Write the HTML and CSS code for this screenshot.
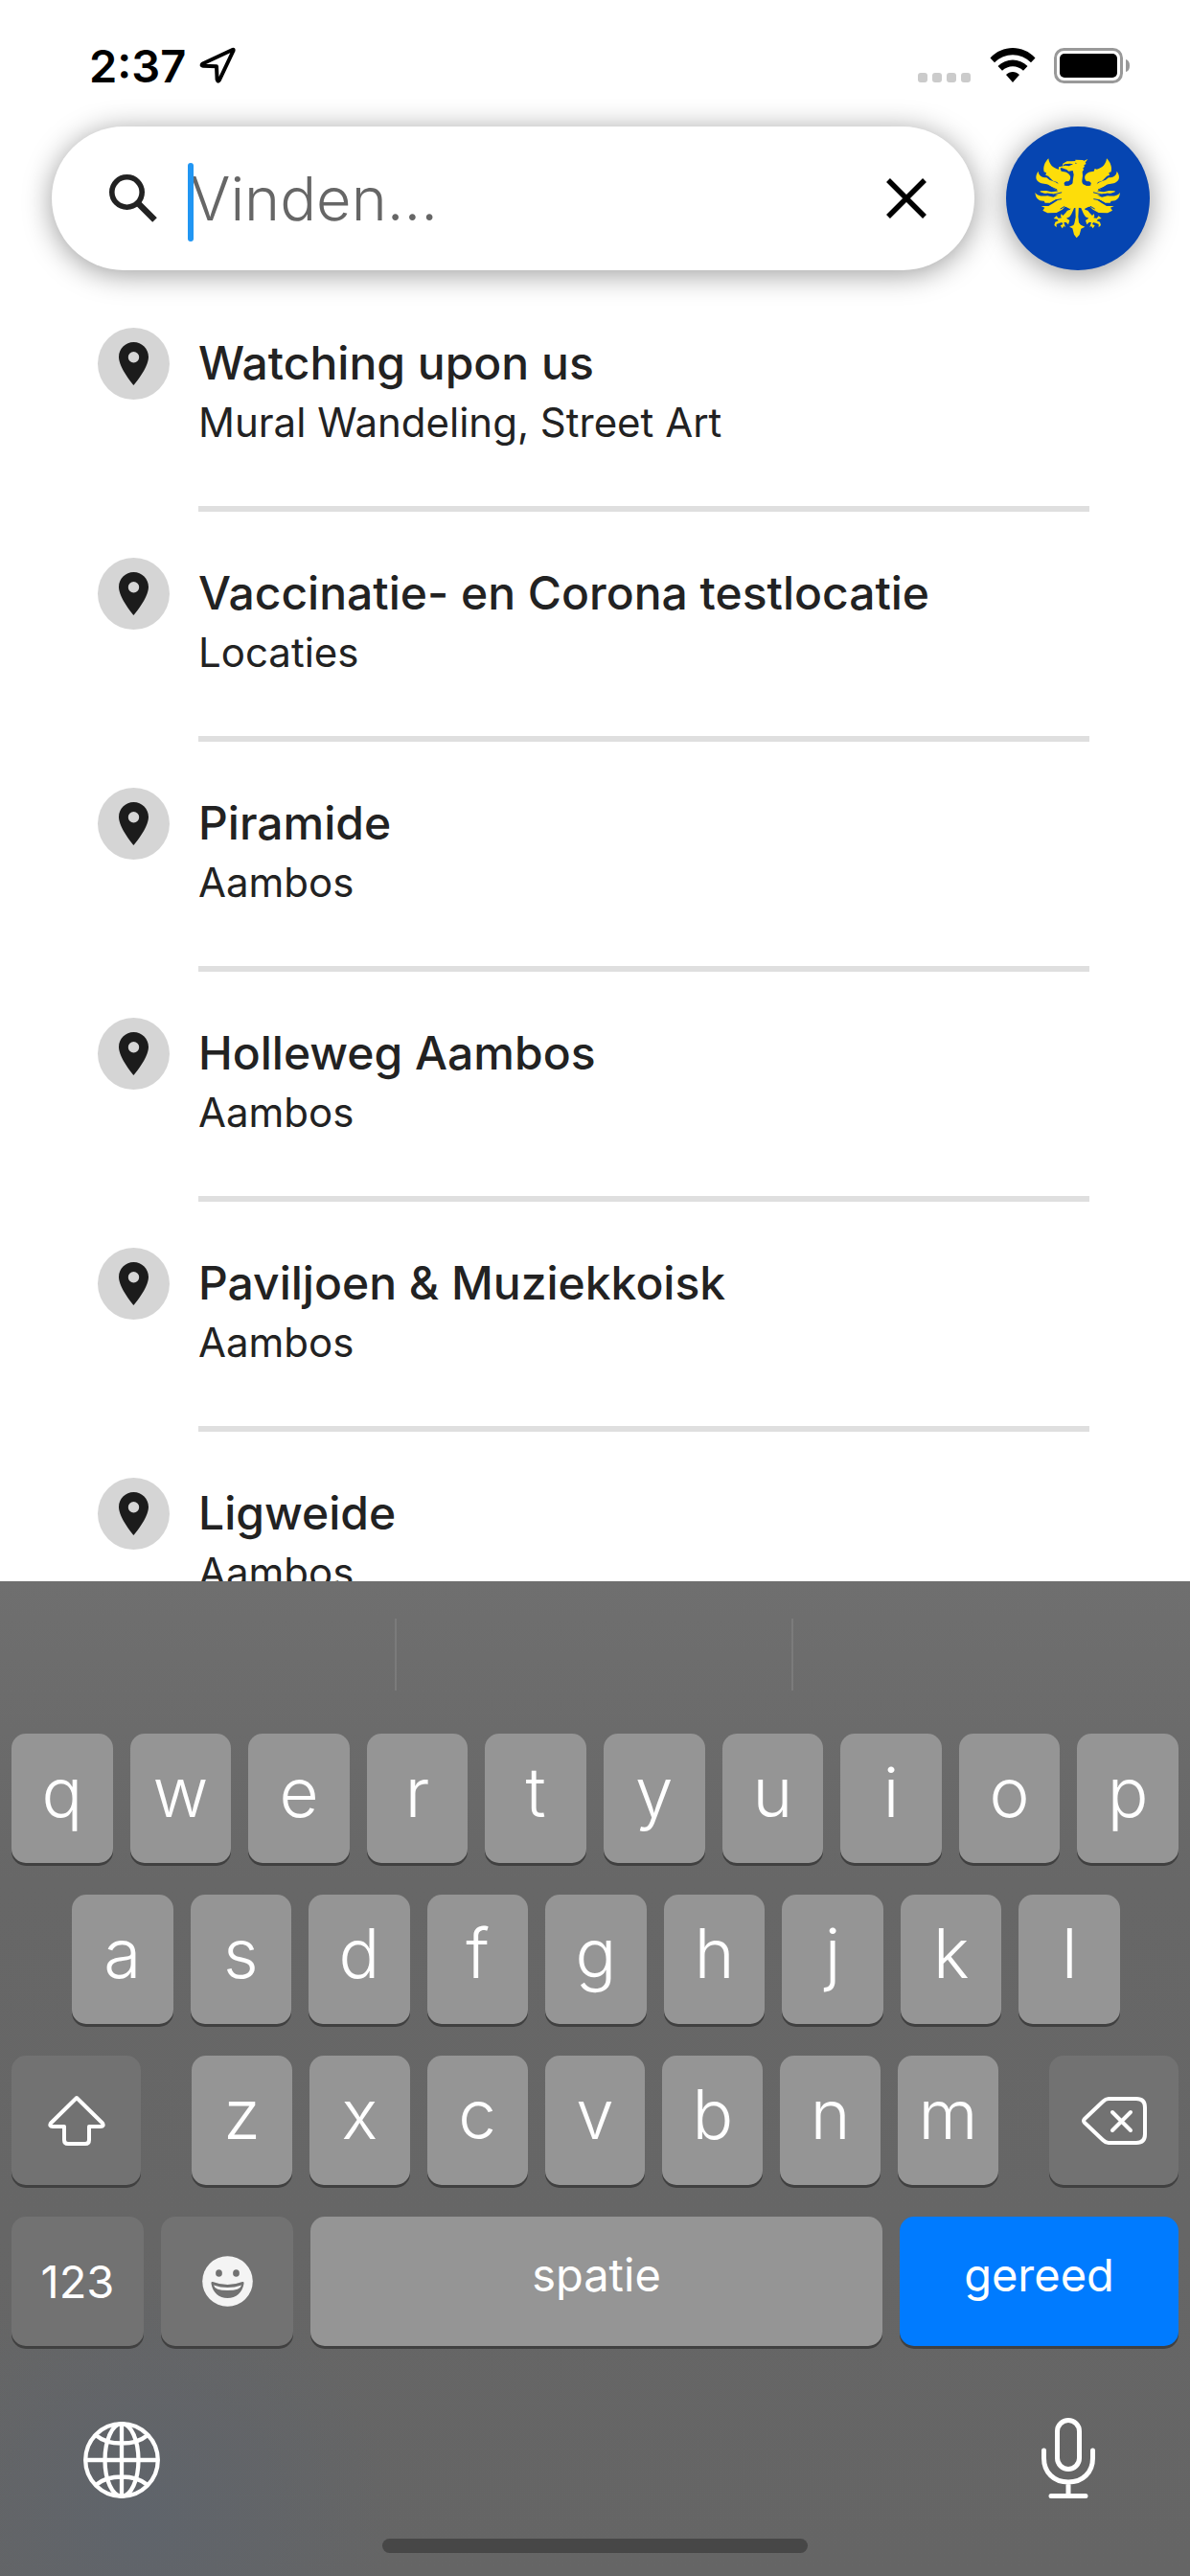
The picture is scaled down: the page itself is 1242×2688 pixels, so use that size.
FILE: index.html
```html
<!DOCTYPE html>
<html lang="nl">
<head>
  <meta charset="UTF-8">
  <meta name="viewport" content="width=device-width, initial-scale=1">
  <title>Vinden</title>
  <link rel="stylesheet" href="styles.css">
</head>
<body>

<!-- shared icons -->
<svg class="sprite" aria-hidden="true">
  <symbol id="pin" viewBox="0 0 31 45">
    <path fill-rule="evenodd" d="M15.500 0C6.900 0 0 6.900 0 15.500C0 27 15.500 45 15.500 45S31 27 31 15.500C31 6.900 24.100 0 15.500 0ZM15.500 10a5.700 5.700 0 1 1 0 11.400a5.700 5.700 0 0 1 0-11.400Z"/>
  </symbol>
</svg>

<div class="status">
  <div class="status-left">
    <span>2:37</span>
    <svg width="38" height="38" viewBox="0 0 38 38"><path d="M34.500 3L3.500 17.500Q1.500 19.500 4 19.800L18 20.300L18.600 34Q19.500 37 21 34.500L35.500 4Q36 2 34.500 3Z" fill="none" stroke="#000" stroke-width="4" stroke-linejoin="round"/></svg>
  </div>
  <div class="status-right">
    <svg class="signal" width="56" height="36" viewBox="0 0 56 36" fill="#cbcbcb"><rect x="0" y="26" width="10" height="10" rx="3"/><rect x="15" y="26" width="10" height="10" rx="3"/><rect x="30" y="26" width="10" height="10" rx="3"/><rect x="45" y="26" width="10" height="10" rx="3"/></svg>
    <svg width="48" height="36" viewBox="0 0 48 36"><path d="M0.500 10.500C13-3.500 35-3.500 47.500 10.500L43 15.200C32.500 4.500 15.500 4.500 5 15.200ZM8.500 19C17 10.300 31 10.300 39.500 19L35 23.700C29 17.700 19 17.700 13 23.700ZM17 28C21 24 27 24 31 28L24 36Z"/></svg>
    <svg width="80" height="37" viewBox="0 0 80 37"><rect x="1.500" y="1.500" width="69" height="34" rx="9" fill="none" stroke="#999" stroke-width="3"/><rect x="6" y="6" width="60" height="25" rx="5"/><path d="M75 12Q79 13 79 18.500T75 25Z" fill="#999"/></svg>
  </div>
</div>

<header class="header">
  <form class="search">
    <label for="query" aria-label="Vinden">
      <svg width="50" height="50" viewBox="0 0 50 50" fill="none" stroke="#222"><circle cx="18.500" cy="18.500" r="15.700" stroke-width="5.600"/><path d="M30.500 30.500L47.500 47.500" stroke-width="6.500"/></svg>
    </label>
    <span class="caret"></span>
    <input type="text" id="query" name="query" placeholder="Vinden...">
    <button type="reset" class="clear" aria-label="Wissen">
      <svg width="42" height="42" viewBox="0 0 42 42" stroke="#000" stroke-width="5.500"><path d="M2 2L40 40M40 2L2 40"/></svg>
    </button>
  </form>
  <a class="crest" href="#" aria-label="Gemeente">
    <svg viewBox="30 36 450 450" fill="#fddd0a">
      <defs>
        <g id="wing">
          <!-- feathers, top to bottom -->
          <path d="M163 136C151 148 145 163 149 178L156 181L154 188L162 191L177 206L190 210L196 220L215 220C209 216 212 208 221 208C229 208 233 199 231 191C226 180 216 177 203 176L200 168L194 170C176 166 165 154 163 136Z"/>
          <path d="M131 176C121 190 122 203 133 210C143 217 155 213 167 221L180 231L200 240L216 246L216 222L198 218L183 209L166 203L157 196C142 195 132 190 131 176Z"/>
          <path d="M137 238L156 237L172 241L196 238L212 244L206 254L184 250L168 246L150 245L137 241Z"/>
          <path d="M121 243C123 262 133 270 149 269L152 275L169 275L187 265L212 266L222 246L196 249L178 257L160 253C142 255 129 254 121 243Z"/>
          <path d="M214 248L196 264L178 276L163 285L140 285L151 290L145 299L160 307L188 306L206 296L222 280Z"/>
          <!-- shoulder -->
          <path d="M196 212L215 221L254 221V290L232 292L214 286L196 296L186 280L200 266L188 258L200 246L188 234Z"/>
          <!-- leg and claws -->
          <path d="M236 280L231 296L222 299L216 307L208 315L203 309L201 317L204 322L194 323L188 316L179 324L190 326L194 331L184 335L181 345L188 352L188 342L197 338L205 336L208 342L200 346L206 355L211 348L216 351L211 336L218 336L225 343L229 330L219 323L229 319L235 310L243 292Z"/>
          <g fill="none" stroke="#0645b1" stroke-width="3">
            <path d="M140 219Q158 218 172 226L190 234M158 246L178 249L206 242M168 276L186 266L204 263M214 286L200 294"/>
          </g>
        </g>
      </defs>
      <use href="#wing"/>
      <use href="#wing" transform="matrix(-1 0 0 1 508 0)"/>
      <path d="M286 138L274 143L270 141L247 140L247 144L235 145L221 145L208 152L207 160L213 154L230 152L240 154L227 160L216 158L195 163L195 172L203 165L220 171L226 176L239 174L242 187L239 207C240 218 232 220 219 222L208 222L203 252L214 286L230 294L247 281L248 320L244 339L241 345L228 350L238 355L243 374L251 385L260 375L265 356L277 350L264 344L258 337L256 318L258 281L276 294L292 284L305 252L298 222L287 222C273 220 267 216 268 205L270 190L269 177L273 172L271 166L276 162L274 157L281 153L278 149Z"/>
      <g fill="#0645b1">
        <path d="M246 149L253 151L247 152ZM228 157L239 154L231 153L215 154Z"/>
        <ellipse cx="222" cy="215" rx="9" ry="6"/>
        <ellipse cx="286" cy="215" rx="9" ry="6"/>
      </g>
    </svg>
  </a>
</header>

<main class="results">
  <ul>
    <li>
      <span class="icon"><svg><use href="#pin"/></svg></span>
      <div class="place"><h2>Watching upon us</h2><p>Mural Wandeling, Street Art</p></div>
    </li>
    <li>
      <span class="icon"><svg><use href="#pin"/></svg></span>
      <div class="place"><h2>Vaccinatie- en Corona testlocatie</h2><p>Locaties</p></div>
    </li>
    <li>
      <span class="icon"><svg><use href="#pin"/></svg></span>
      <div class="place"><h2>Piramide</h2><p>Aambos</p></div>
    </li>
    <li>
      <span class="icon"><svg><use href="#pin"/></svg></span>
      <div class="place"><h2>Holleweg Aambos</h2><p>Aambos</p></div>
    </li>
    <li>
      <span class="icon"><svg><use href="#pin"/></svg></span>
      <div class="place"><h2>Paviljoen &amp; Muziekkoisk</h2><p>Aambos</p></div>
    </li>
    <li>
      <span class="icon"><svg><use href="#pin"/></svg></span>
      <div class="place"><h2>Ligweide</h2><p>Aambos</p></div>
    </li>
  </ul>
</main>

<section class="keyboard">
  <div class="suggestions"><div></div><div></div><div></div></div>
  <div class="keys">
    <div class="row row-1">
      <button>q</button><button>w</button><button>e</button><button>r</button><button>t</button><button>y</button><button>u</button><button>i</button><button>o</button><button>p</button>
    </div>
    <div class="row row-2">
      <button>a</button><button>s</button><button>d</button><button>f</button><button>g</button><button>h</button><button>j</button><button>k</button><button>l</button>
    </div>
    <div class="row-3">
      <button class="dark" aria-label="Shift">
        <svg width="60" height="64" viewBox="0 0 60 54" fill="none" stroke="#fff" stroke-width="4" stroke-linejoin="round"><path d="M30 3L57 29.500Q59 33 55 33H43V47Q43 51 39 51H21Q17 51 17 47V33H5Q1 33 3 29.500Z"/></svg>
      </button>
      <div class="row letters">
        <button>z</button><button>x</button><button>c</button><button>v</button><button>b</button><button>n</button><button>m</button>
      </div>
      <button class="dark" aria-label="Backspace">
        <svg width="68" height="50" viewBox="0 0 68 50" fill="none" stroke="#fff" stroke-width="4" stroke-linejoin="round" stroke-linecap="round"><path d="M28 2H57Q66 2 66 11V39Q66 48 57 48H28Q25 48 22 45L3 27Q1 25 3 23L22 5Q25 2 28 2ZM32 16L51 35M51 16L32 35"/></svg>
      </button>
    </div>
    <div class="row-4">
      <button class="dark numbers">123</button>
      <button class="dark" aria-label="Emoji">
        <svg width="53" height="53" viewBox="0 0 53 53"><circle cx="26.500" cy="26.500" r="26.300" fill="#f4f4f4"/><g fill="#727272"><ellipse cx="17.500" cy="18" rx="3.400" ry="3.800"/><ellipse cx="35.500" cy="18" rx="3.400" ry="3.800"/><path d="M11 27Q26.500 33 42 27Q44 26.500 43.500 29C42 38 35.500 44 26.500 44S11 38 9.500 29Q9 26.500 11 27Z"/></g><path d="M12 30.500Q26.500 35.500 41 30.500Q40 36 26.500 36T12 30.500Z" fill="#f4f4f4"/></svg>
      </button>
      <button class="space">spatie</button>
      <button class="done">gereed</button>
    </div>
  </div>
  <div class="tools">
    <button aria-label="Toetsenbord wisselen">
      <svg width="80" height="80" viewBox="0 0 80 80" fill="none" stroke="#fff" stroke-width="4.300"><circle cx="40" cy="40" r="37.800"/><ellipse cx="40" cy="40" rx="17.500" ry="37.800"/><path d="M40 2V78M2 40H78M13 14Q23 22.500 40 22.500T67 14M13 66Q23 57.500 40 57.500T67 66"/></svg>
    </button>
    <button aria-label="Dicteren">
      <svg width="56" height="84" viewBox="0 0 56 84" fill="none" stroke="#fff" stroke-width="5" stroke-linecap="round"><rect x="16.500" y="2.500" width="23" height="51" rx="11.500"/><path d="M2.500 34V42C2.500 57 13 67 28 67S53.500 57 53.500 42V34M28 67V81M10 81.500H46"/></svg>
    </button>
  </div>
  <div class="home"></div>
</section>

</body>
</html>
```
FILE: styles.css
```css
* {
  box-sizing: border-box;
}
body {
  margin: 0;
  height: 100vh;
  display: flex;
  flex-direction: column;
  font-family: Inter, "Liberation Sans", sans-serif;
  background: #fff;
  color: #222;
}
svg {
  display: block;
  flex: none;
}
button {
  border: none;
  padding: 0;
  background: none;
  font-family: inherit;
  color: inherit;
  cursor: pointer;
}
.sprite {
  display: none;
}

/* status bar */
.status {
  height: 132px;
  padding: 4px 62px 0 93px;
  display: flex;
  flex: none;
  align-items: center;
  justify-content: space-between;
  color: #000;
  font-size: 47px;
  font-weight: 600;
}
.status-left {
  display: flex;
  align-items: center;
  gap: 14px;
}
.status-right {
  display: flex;
  align-items: center;
  gap: 19px;
}

/* search */
.header {
  display: flex;
  flex: none;
  gap: 33px;
  padding: 0 42px 0 54px;
}
.search {
  flex: 1;
  min-width: 0;
  height: 150px;
  padding: 0 50px 0 60px;
  display: flex;
  align-items: center;
  background: #fff;
  border-radius: 75px;
  box-shadow: 0 4px 30px rgba(0,0,0,0.4);
}
.caret {
  width: 6px;
  height: 82px;
  margin: 8px -4px 0 32px;
  border-radius: 3px;
  background: #2196f3;
  z-index: 1;
}
.search input {
  flex: 1;
  min-width: 0;
  padding: 0;
  border: none;
  outline: none;
  background: none;
  font-family: inherit;
  font-size: 63px;
  font-weight: 300;
  color: #222;
}
.search input::placeholder {
  color: #666;
  opacity: 1;
}
.crest {
  width: 150px;
  height: 150px;
  border-radius: 50%;
  background: #0645b1;
  box-shadow: 0 4px 30px rgba(0,0,0,0.4);
}

/* results */
.results {
  flex: 1;
  min-height: 0;
  overflow: hidden;
  padding: 60px 105px 0 102px;
}
.results ul {
  list-style: none;
  margin: 0;
  padding: 0;
  display: grid;
  gap: 48px;
}
.results li {
  display: flex;
  align-items: flex-start;
  gap: 30px;
}
.icon {
  width: 75px;
  height: 75px;
  flex: none;
  display: flex;
  align-items: center;
  justify-content: center;
  border-radius: 50%;
  background: #d5d5d5;
}
.icon svg {
  width: 31px;
  height: 45px;
  fill: #1c1c1c;
}
.place {
  flex: 1;
  padding: 8px 0 54px;
  border-bottom: 6px solid #dfdfdf;
}
.place h2 {
  margin: 0;
  font-size: 48px;
  font-weight: 500;
  line-height: 58px;
}
.place p {
  margin: 0;
  font-size: 42px;
  line-height: 66px;
}

/* keyboard */
.keyboard {
  flex: none;
  padding: 0 12px 24px;
  color: #fff;
  background:
    radial-gradient(circle 260px at 150px 980px, #5f646b, transparent),
    linear-gradient(#6f6f6f, #676767 30%, #656565);
}
.suggestions {
  display: grid;
  grid-template-columns: repeat(3, 1fr);
  margin: 0 -12px;
  padding: 39px 0 45px;
}
.suggestions div {
  height: 75px;
  border-right: 2px solid #7b7b7b;
}
.suggestions div:last-child {
  border: none;
}
.keys {
  display: grid;
  gap: 33px;
}
.keys button {
  height: 135px;
  min-width: 0;
  display: flex;
  align-items: center;
  justify-content: center;
  padding-bottom: 14px;
  border-radius: 15px;
  background: #959595;
  box-shadow: 0 3px 0 #404040;
  font-size: 71px;
  font-weight: 350;
}
.row {
  display: grid;
  grid-auto-flow: column;
  grid-auto-columns: 1fr;
  gap: 18px;
}
.row-2 {
  padding: 0 61px 0 63px;
}
.row-3 {
  display: grid;
  grid-template-columns: 135px 1fr 135px;
  gap: 53px;
}
.row-4 {
  display: grid;
  grid-template-columns: 138px 138px 1fr 291px;
  gap: 18px;
}
.keys .dark {
  padding-bottom: 0;
  background: #727272;
}
.keys .numbers,
.keys .space,
.keys .done {
  font-size: 47px;
  font-weight: 400;
}
.keys .done {
  background: #007bff;
}
.tools {
  display: flex;
  align-items: flex-end;
  justify-content: space-between;
  padding: 75px 87px 42px 75px;
}
.home {
  width: 444px;
  max-width: 100%;
  height: 15px;
  margin: 0 auto;
  border-radius: 8px;
  background: #474747;
}
```
